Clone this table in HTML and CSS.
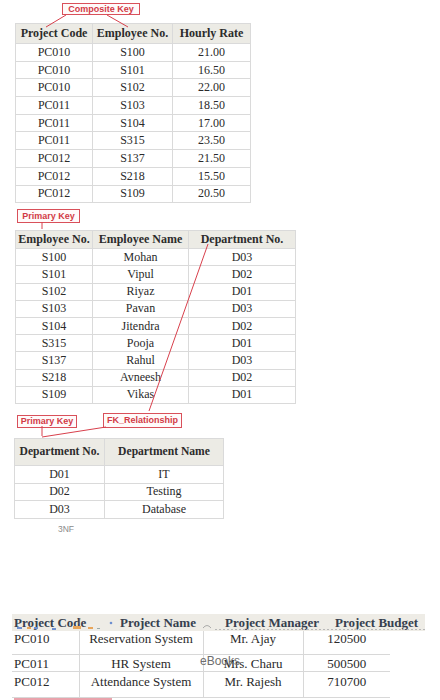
FILE: index.html
```html
<!DOCTYPE html>
<html>
<head>
<meta charset="utf-8">
<link rel="stylesheet" href="styles.css">
</head>
<body>
<div class="page">
  <div class="keyrow k1"><span class="key key-composite">Composite Key</span></div>
  <table class="t t1">
    <colgroup><col class="c77"><col class="c80"><col class="c78"></colgroup>
    <tr class="hd"><th>Project Code</th><th>Employee No.</th><th>Hourly Rate</th></tr>
    <tr><td>PC010</td><td>S100</td><td>21.00</td></tr>
    <tr><td>PC010</td><td>S101</td><td>16.50</td></tr>
    <tr><td>PC010</td><td>S102</td><td>22.00</td></tr>
    <tr><td>PC011</td><td>S103</td><td>18.50</td></tr>
    <tr><td>PC011</td><td>S104</td><td>17.00</td></tr>
    <tr><td>PC011</td><td>S315</td><td>23.50</td></tr>
    <tr><td>PC012</td><td>S137</td><td>21.50</td></tr>
    <tr><td>PC012</td><td>S218</td><td>15.50</td></tr>
    <tr><td>PC012</td><td>S109</td><td>20.50</td></tr>
  </table>

  <div class="keyrow k2"><span class="key key-pk">Primary Key</span></div>
  <table class="t t2">
    <colgroup><col class="c77"><col class="c96"><col class="c107"></colgroup>
    <tr class="hd"><th>Employee No.</th><th>Employee Name</th><th>Department No.</th></tr>
    <tr><td>S100</td><td>Mohan</td><td>D03</td></tr>
    <tr><td>S101</td><td>Vipul</td><td>D02</td></tr>
    <tr><td>S102</td><td>Riyaz</td><td>D01</td></tr>
    <tr><td>S103</td><td>Pavan</td><td>D03</td></tr>
    <tr><td>S104</td><td>Jitendra</td><td>D02</td></tr>
    <tr><td>S315</td><td>Pooja</td><td>D01</td></tr>
    <tr><td>S137</td><td>Rahul</td><td>D03</td></tr>
    <tr><td>S218</td><td>Avneesh</td><td>D02</td></tr>
    <tr><td>S109</td><td>Vikas</td><td>D01</td></tr>
  </table>

  <div class="keyrow k3"><span class="key key-pk2">Primary Key</span><span class="key key-fk">FK_Relationship</span></div>
  <table class="t t3">
    <colgroup><col class="c90"><col class="c119"></colgroup>
    <tr class="hd"><th>Department No.</th><th>Department Name</th></tr>
    <tr><td>D01</td><td>IT</td></tr>
    <tr><td>D02</td><td>Testing</td></tr>
    <tr><td>D03</td><td>Database</td></tr>
  </table>
  <div class="caption">3NF</div>

  <div class="phead">
    <div class="ph">Project Code</div>
    <div class="ph">Project Name</div>
    <div class="ph">Project Manager</div>
    <div class="ph">Project Budget</div>
  </div>
  <table class="t4">
    <colgroup><col class="p1"><col class="p2"><col class="p3"><col class="p4"></colgroup>
    <tr class="r1"><td class="first">PC010</td><td>Reservation System</td><td>Mr. Ajay</td><td>120500</td></tr>
    <tr class="r2"><td class="first">PC011</td><td>HR System</td><td>Mrs. Charu</td><td>500500</td></tr>
    <tr class="r3"><td class="first">PC012</td><td>Attendance System</td><td>Mr. Rajesh</td><td>710700</td></tr>
  </table>
  <div class="pinkbar"></div>

  <span class="watermark">eBooks</span>

  <svg class="lines" width="440" height="700" viewBox="0 0 440 700">
    <g stroke="#d8404c" stroke-width="1" fill="none">
      <path d="M66 15 L46 27"/>
      <path d="M107 15 L128 27"/>
      <path d="M42 222 L42 229"/>
      <path d="M208 244 L149 411"/>
      <path d="M42 426 L42 436"/>
      <path d="M106 427 L42 437"/>
    </g>
    <g stroke="#b8b8b8" stroke-width="1" stroke-dasharray="2 2">
      <path d="M215 629.5 H425"/>
    </g>
    <g>
      <rect x="17" y="627" width="5" height="2" fill="#6d8fd0"/>
      <rect x="34" y="627" width="4" height="2" fill="#6d8fd0"/>
      <rect x="52" y="628" width="4" height="2" fill="#6d8fd0"/>
      <rect x="27" y="627" width="4" height="2" fill="#e8a55a"/>
      <rect x="73" y="626" width="8" height="3" fill="#e8a55a"/>
      <rect x="88" y="627" width="5" height="2" fill="#e8a55a"/>
      <circle cx="111" cy="623" r="1.3" fill="#6d8fd0"/>
      <rect x="97" y="628" width="3" height="1" fill="#9aa"/>
      <path d="M203 628 Q207 623 211 628" stroke="#999" fill="none" stroke-width="0.8"/>
      <path d="M80 618 L79 624" stroke="#777" stroke-width="0.8"/>
    </g>
  </svg>
</div>
</body>
</html>
```
FILE: styles.css
```css
* { box-sizing: border-box; }
html, body { margin: 0; padding: 0; background: #fff; }
body { font-family: "Liberation Serif", "Times New Roman", serif; color: #2a2a2a; }

.page { position: relative; width: 440px; height: 700px; overflow: hidden; }

.keyrow { display: flex; align-items: flex-start; }
.key {
  display: inline-flex; align-items: center; justify-content: center;
  border: 1px solid #d9505a;
  color: #d23a46;
  background: #fffafa;
  font-family: "Liberation Sans", Arial, sans-serif;
  font-weight: bold;
  font-size: 9px;
  line-height: 1;
  white-space: nowrap;
}
.k1 { padding: 3px 0 0 62px; height: 15px; }
.key-composite { width: 78px; height: 12px; }
.k2 { margin-top: 6px; padding-left: 17px; height: 14px; }
.key-pk { width: 63px; height: 14px; }
.k3 { margin-top: 9px; height: 16px; }
.key-pk2 { margin: 2px 0 0 17px; width: 60px; height: 13px; }
.key-fk { margin-left: 26px; width: 79px; height: 15px; }

.t {
  border-collapse: collapse;
  table-layout: fixed;
  font-size: 12px;
  border: 1px solid #d4d4d4;
}
.t th, .t td {
  border: 1px solid #dadada;
  text-align: center;
  padding: 0;
  line-height: 13px;
  white-space: nowrap;
}
.t th { background: #ecebe5; font-weight: bold; color: #2c2c2c; }

.t1 { margin: 8px 0 0 15px; width: 235px; }
.t1 .hd { height: 20px; }
.t1 tr { height: 17.7px; }
.c77 { width: 77px; } .c80 { width: 80px; } .c78 { width: 78px; }

.t2 { margin: 7px 0 0 15px; width: 280px; }
.t2 .hd { height: 18px; }
.t2 tr { height: 17.2px; }
.c96 { width: 96px; } .c107 { width: 107px; }

.t3 { margin: 9px 0 0 14px; width: 209px; }
.t3 .hd { height: 27px; }
.t3 tr { height: 17.7px; }
.t3 th { font-size: 11.6px; }
.c90 { width: 90px; } .c119 { width: 119px; }

.caption {
  margin: 5px 0 0 58px;
  font-family: "Liberation Sans", Arial, sans-serif;
  font-size: 8.5px;
  color: #8a8a8a;
  line-height: 10px;
}

.phead {
  margin: 80px 0 0 12px;
  width: 413px;
  height: 17px;
  background: #eeece6;
  display: grid;
  grid-template-columns: 106px 105px 110px 92px;
  font-size: 13px;
  font-weight: bold;
  color: #36404f;
  line-height: 17px;
}
.ph { padding-left: 2px; white-space: nowrap; }

.t4 {
  margin-left: 12px;
  width: 378px;
  border-collapse: collapse;
  table-layout: fixed;
  font-size: 13px;
}
.p1 { width: 67px; } .p2 { width: 124px; } .p3 { width: 100px; } .p4 { width: 87px; }
.t4 td {
  padding: 0;
  text-align: center;
  vertical-align: top;
  line-height: 15px;
  border-left: 1px solid #d8d8d8;
  border-bottom: 1px solid #d8d8d8;
  white-space: nowrap;
}
.t4 td.first { text-align: left; padding-left: 2px; border-left: none; }
.t4 .r1 { height: 24px; }
.t4 .r1 td { padding-top: 0; }
.t4 .r2 { height: 17px; }
.t4 .r2 td { padding-top: 1px; }
.t4 .r3 { height: 26px; }
.t4 .r3 td { padding-top: 2px; }

.pinkbar { margin: 0 0 0 14px; width: 98px; height: 3px; background: #e9a3ac; }

.watermark {
  position: absolute;
  left: 200px; top: 654px;
  font-family: "Liberation Sans", Arial, sans-serif;
  font-size: 12px;
  color: #6e6e6e;
  line-height: 14px;
}

.lines { position: absolute; left: 0; top: 0; pointer-events: none; }
```
